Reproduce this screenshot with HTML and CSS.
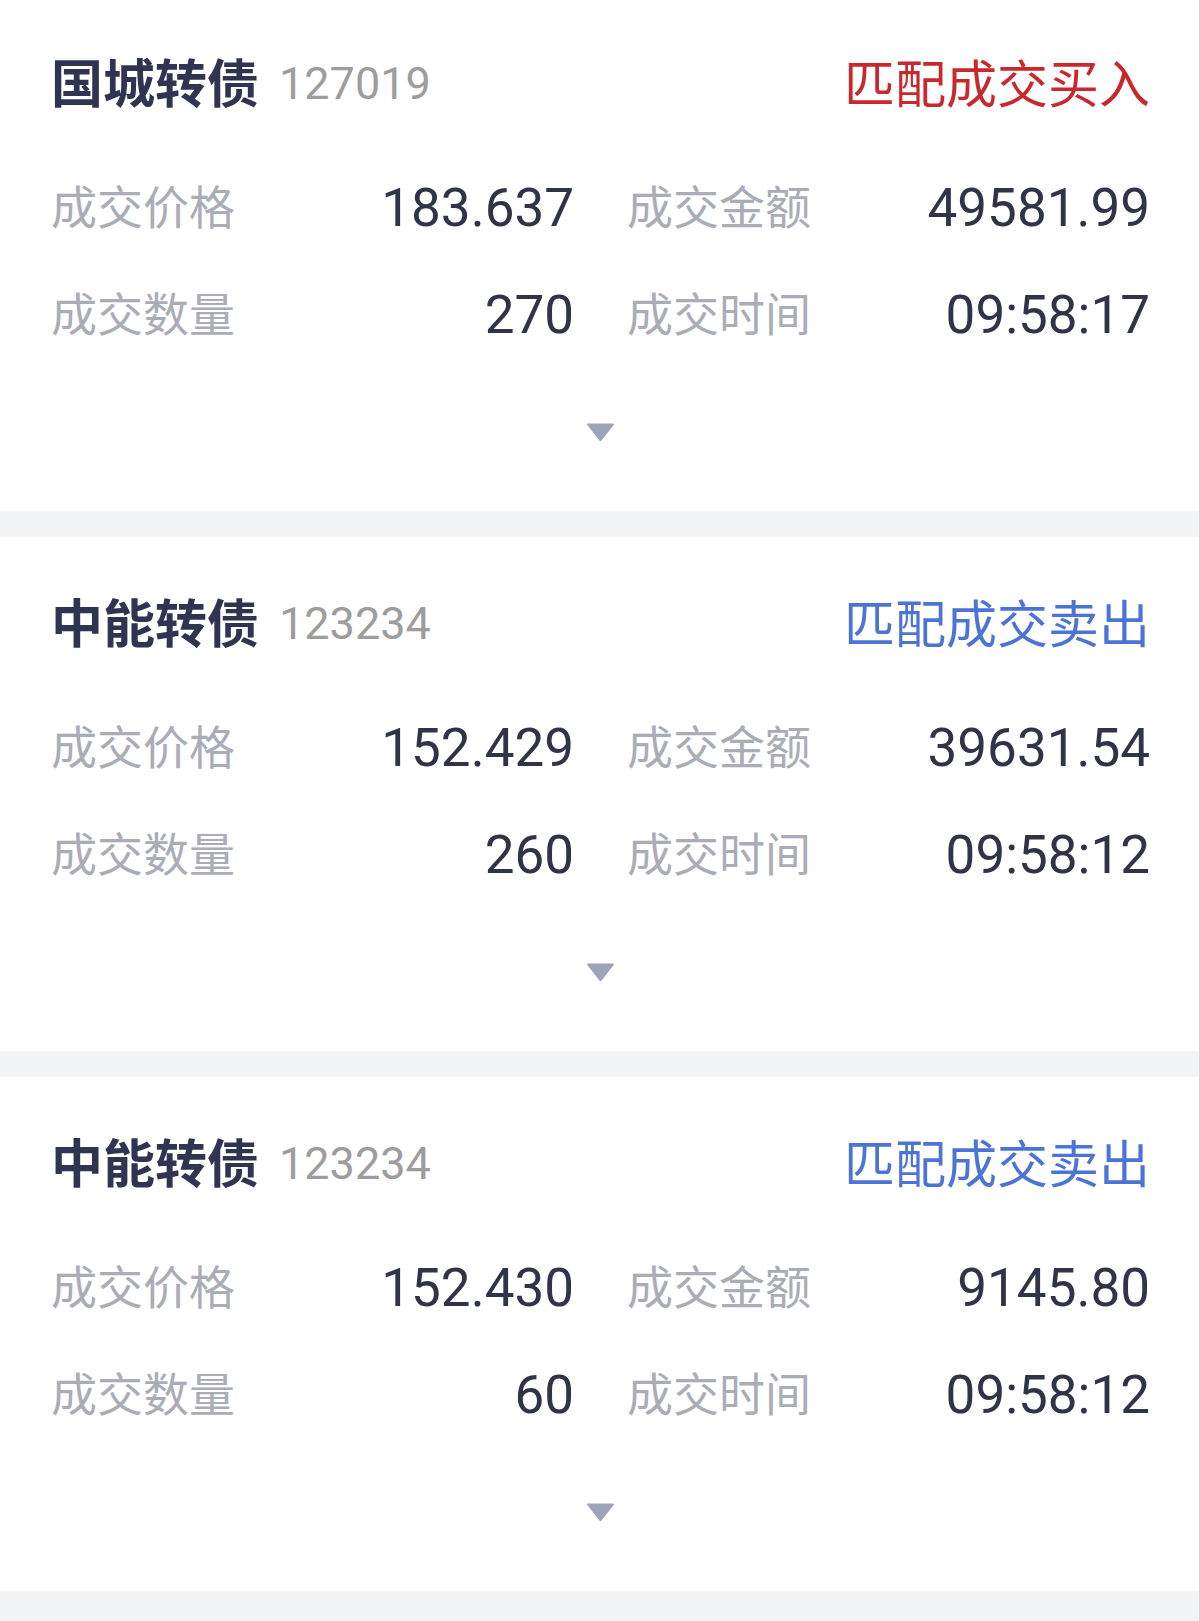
FILE: index.html
```html
<!DOCTYPE html>
<html lang="zh-CN">
<head>
  <meta charset="UTF-8" />
  <meta name="viewport" content="width=device-width, initial-scale=1" />
  <title>成交明细</title>
  <link rel="stylesheet" href="styles.css">
</head>
<body>
  <div class="list">

    <div class="card first">
      <div class="head">
        <div class="name">国城转债<span class="code">127019</span></div>
        <div class="tag buy">匹配成交买入</div>
      </div>
      <div class="rows">
        <div class="cell"><span class="label">成交价格</span><span class="value">183.637</span></div>
        <div class="cell"><span class="label">成交金额</span><span class="value">49581.99</span></div>
        <div class="cell"><span class="label">成交数量</span><span class="value">270</span></div>
        <div class="cell"><span class="label">成交时间</span><span class="value">09:58:17</span></div>
      </div>
      <div class="toggle">
        <svg width="29" height="19" viewBox="0 0 29 19"><path d="M2 0.5 H27 Q28.8 0.5 27.7 2 L15.6 17.6 Q14.5 19 13.4 17.6 L1.3 2 Q0.2 0.5 2 0.5 Z" fill="#9ba4b9"/></svg>
      </div>
    </div>

    <div class="card">
      <div class="head">
        <div class="name">中能转债<span class="code">123234</span></div>
        <div class="tag sell">匹配成交卖出</div>
      </div>
      <div class="rows">
        <div class="cell"><span class="label">成交价格</span><span class="value">152.429</span></div>
        <div class="cell"><span class="label">成交金额</span><span class="value">39631.54</span></div>
        <div class="cell"><span class="label">成交数量</span><span class="value">260</span></div>
        <div class="cell"><span class="label">成交时间</span><span class="value">09:58:12</span></div>
      </div>
      <div class="toggle">
        <svg width="29" height="19" viewBox="0 0 29 19"><path d="M2 0.5 H27 Q28.8 0.5 27.7 2 L15.6 17.6 Q14.5 19 13.4 17.6 L1.3 2 Q0.2 0.5 2 0.5 Z" fill="#9ba4b9"/></svg>
      </div>
    </div>

    <div class="card">
      <div class="head">
        <div class="name">中能转债<span class="code">123234</span></div>
        <div class="tag sell">匹配成交卖出</div>
      </div>
      <div class="rows">
        <div class="cell"><span class="label">成交价格</span><span class="value">152.430</span></div>
        <div class="cell"><span class="label">成交金额</span><span class="value">9145.80</span></div>
        <div class="cell"><span class="label">成交数量</span><span class="value">60</span></div>
        <div class="cell"><span class="label">成交时间</span><span class="value">09:58:12</span></div>
      </div>
      <div class="toggle">
        <svg width="29" height="19" viewBox="0 0 29 19"><path d="M2 0.5 H27 Q28.8 0.5 27.7 2 L15.6 17.6 Q14.5 19 13.4 17.6 L1.3 2 Q0.2 0.5 2 0.5 Z" fill="#9ba4b9"/></svg>
      </div>
    </div>

  </div>
</body>
</html>
```

FILE: styles.css
```css
html, body {
  margin: 0;
  padding: 0;
  background: #f3f4f6;
}

body {
  font-family: "Noto Sans CJK SC", "Noto Sans", sans-serif;
  color: #2f3447;
  overflow: hidden;
}

.list {
  display: flex;
  flex-direction: column;
  gap: 26px;
  border-right: 1px solid #d2d4d8;
  min-height: 1700px;
}

.card {
  background: #fff;
  height: 514px;
  box-sizing: border-box;
  padding: 30px 49px 0 51px;
}

.card.first {
  margin-top: -3px;
}

.head {
  height: 108px;
  display: flex;
  align-items: center;
  justify-content: space-between;
}

.name {
  font-size: 52px;
  font-weight: 700;
  color: #2f3550;
  line-height: 1;
  display: flex;
  align-items: center;
}

.code {
  font-family: Roboto, "Liberation Sans", sans-serif;
  font-weight: 400;
  font-size: 45px;
  color: #9d9d9d;
  margin-left: 20px;
  position: relative;
  top: 2px;
}

.tag {
  font-size: 51px;
  line-height: 1;
}

.tag.buy {
  color: #c9282d;
}

.tag.sell {
  color: #4b74d6;
}

.rows {
  margin-top: 18px;
  display: grid;
  grid-template-columns: 1fr 1fr;
  column-gap: 53px;
  grid-auto-rows: 107px;
}

.cell {
  display: flex;
  align-items: center;
  justify-content: space-between;
}

.label {
  font-size: 46px;
  color: #aaadb6;
  line-height: 1;
  position: relative;
  top: -3px;
}

.value {
  font-family: Roboto, "Liberation Sans", sans-serif;
  font-size: 53px;
  color: #2f3447;
  line-height: 1;
  position: relative;
  top: 2px;
}

.toggle {
  display: flex;
  justify-content: center;
  padding-top: 56px;
}

.toggle svg {
  display: block;
}
```
